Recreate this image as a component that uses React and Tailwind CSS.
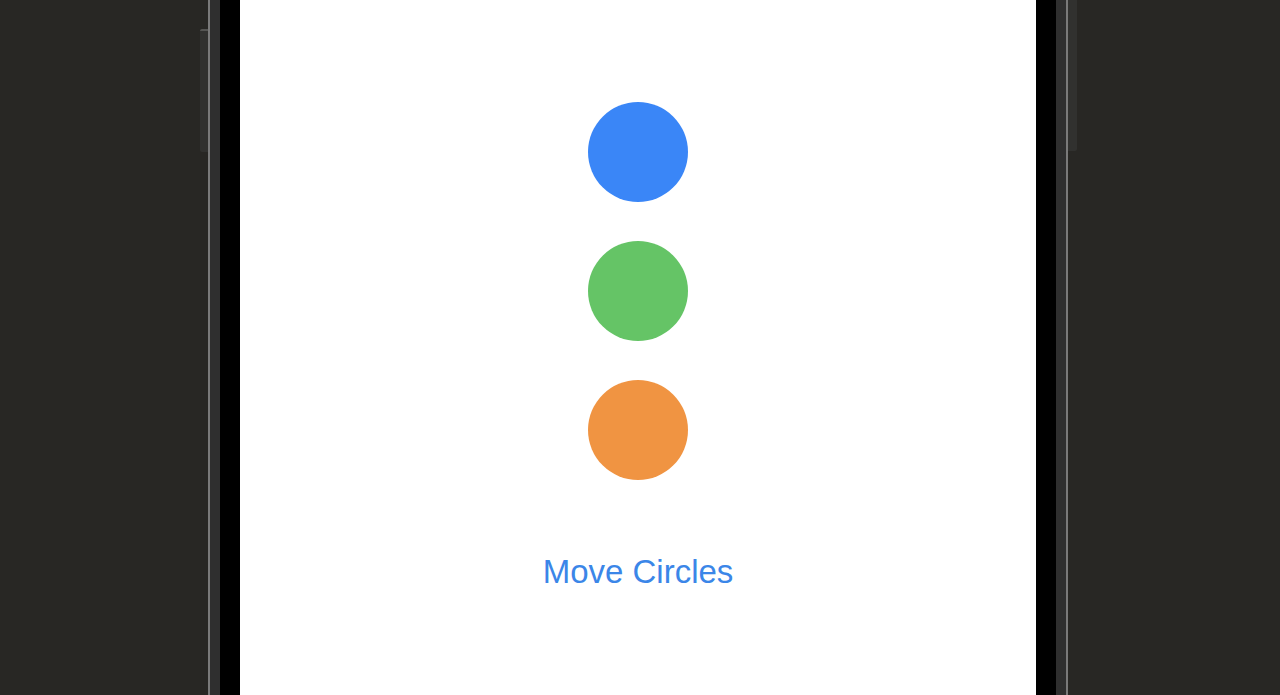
export default function App() {
  return (
    <div className="flex h-[695px] w-full overflow-hidden bg-[#282724]" style={{ fontFamily: '"Liberation Sans", Arial, sans-serif' }}>
      <div className="relative w-[208px] shrink-0 bg-[#282724]">
        <div className="absolute left-[200px] top-[29px] h-[123px] w-[8px] rounded-l-[2px] border-t-2 border-[#555553] bg-[#31312f]" />
      </div>
      <div className="w-[2px] shrink-0 bg-[#7a7a7a]" />
      <div className="w-[10px] shrink-0 bg-[#2f2f2f]" />
      <div className="w-[20px] shrink-0 bg-black" />
      <div className="flex w-[796px] shrink-0 flex-col items-center bg-white pt-[102px]">
        <div className="flex flex-col items-center gap-[39px]">
          <div className="h-[100px] w-[100px] rounded-full bg-[#3a86f7]" />
          <div className="h-[100px] w-[100px] rounded-full bg-[#65c466]" />
          <div className="h-[100px] w-[100px] rounded-full bg-[#f09442]" />
        </div>
        <button className="mt-[72px] text-[33px] leading-[40px] text-[#3b86e8]">Move Circles</button>
      </div>
      <div className="w-[20px] shrink-0 bg-black" />
      <div className="w-[10px] shrink-0 bg-[#2f2f2f]" />
      <div className="w-[2px] shrink-0 bg-[#7a7a7a]" />
      <div className="relative flex-1 bg-[#282724]">
        <div className="absolute left-0 top-0 h-[151px] w-[9px] rounded-br-[2px] bg-[#31312f]" />
      </div>
    </div>
  )
}
